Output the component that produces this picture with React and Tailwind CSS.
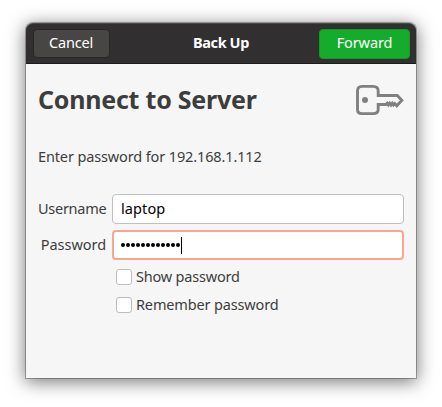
import React from "react";

function KeyIcon() {
  return (
    <svg width="48" height="32" viewBox="0 0 48 32" fill="none" stroke="#808080">
      <path
        strokeWidth="2.9"
        d="M6 2.4H17Q22.2 2.4 22.2 7V11.5H41.3L45.8 16.2L40.8 21.8L38.8 19.6L37.5 21L36.3 19.2L35 21L33.7 19.2L32.4 21L31.2 19.2L29.8 20.5H22.2V25.5Q22.2 29.6 17 29.6H6Q1.5 29.6 1.5 25.5V7Q1.5 2.4 6 2.4Z"
      />
      <circle cx="9" cy="16" r="3" fill="#808080" stroke="none" />
    </svg>
  );
}

function Check({ label, spacing }) {
  return (
    <label className="flex h-7 items-center gap-1">
      <span className="h-4 w-4 rounded-[3px] border border-[#bdbdbd] bg-white" />
      <span className={`pb-[2px] leading-5 ${spacing}`}>{label}</span>
    </label>
  );
}

export default function App() {
  return (
    <div className="h-[407px] w-[442px] overflow-hidden bg-white pt-[23px] pl-[26px] font-['Noto_Sans',sans-serif] text-[14.5px] whitespace-nowrap text-[#3d3d3d]">
      <div className="h-[355px] w-[390px] rounded-t-[7px] bg-[#f6f6f6] shadow-[0_0_0_1px_rgba(0,0,0,0.28),0_3px_18px_1px_rgba(0,0,0,0.53)]">
        <header className="flex h-[41px] items-center justify-between rounded-t-[7px] border-t border-b border-t-[#4b4949] border-b-[#1d1c1c] bg-[#322f30] pr-[6px] pl-[7px] text-white">
          <button className="h-[29px] w-[77px] rounded-[4px] border border-[#272525] bg-[#484644] pr-px pb-px tracking-[-0.2px]">Cancel</button>
          <span className="pb-px pl-[13px] font-bold tracking-[-0.4px]">Back Up</span>
          <button className="h-[30px] w-[91px] rounded-[4px] border border-[#119a26] bg-[#15ac2c] pb-px tracking-[-0.1px]">Forward</button>
        </header>
        <main className="px-3">
          <div className="flex h-[72px] items-center justify-between">
            <h1 className="text-[25px] font-bold tracking-[-0.23px]">Connect to Server</h1>
            <KeyIcon />
          </div>
          <p className="h-[58px] pt-[10px] leading-5 tracking-[-0.13px]">Enter password for 192.168.1.112</p>
          <div className="flex h-[30px] items-center">
            <span className="w-[68px] text-right tracking-[-0.28px]">Username</span>
            <div className="ml-[6px] flex h-[30px] w-[292px] items-center rounded-[4px] border border-[#c0c0c0] bg-white pl-2 tracking-[0.1px] text-black">laptop</div>
          </div>
          <div className="mt-[6px] flex h-[30px] items-center">
            <span className="w-[68px] text-right tracking-[-0.05px]">Password</span>
            <div className="ml-[6px] flex h-[30px] w-[292px] items-center rounded-[4px] border-2 border-[#f5a88e] bg-white pl-[7px] text-black">
              <span className="flex gap-px pr-px">
                {Array.from({ length: 12 }, (_, i) => (
                  <span key={i} className="h-1 w-1 rounded-full bg-black" />
                ))}
              </span>
              <span className="h-[17px] w-px bg-black" />
            </div>
          </div>
          <div className="mt-[3px] pl-[78px]">
            <Check label="Show password" spacing="tracking-[-0.2px]" />
            <Check label="Remember password" spacing="tracking-[-0.15px]" />
          </div>
        </main>
      </div>
    </div>
  );
}
